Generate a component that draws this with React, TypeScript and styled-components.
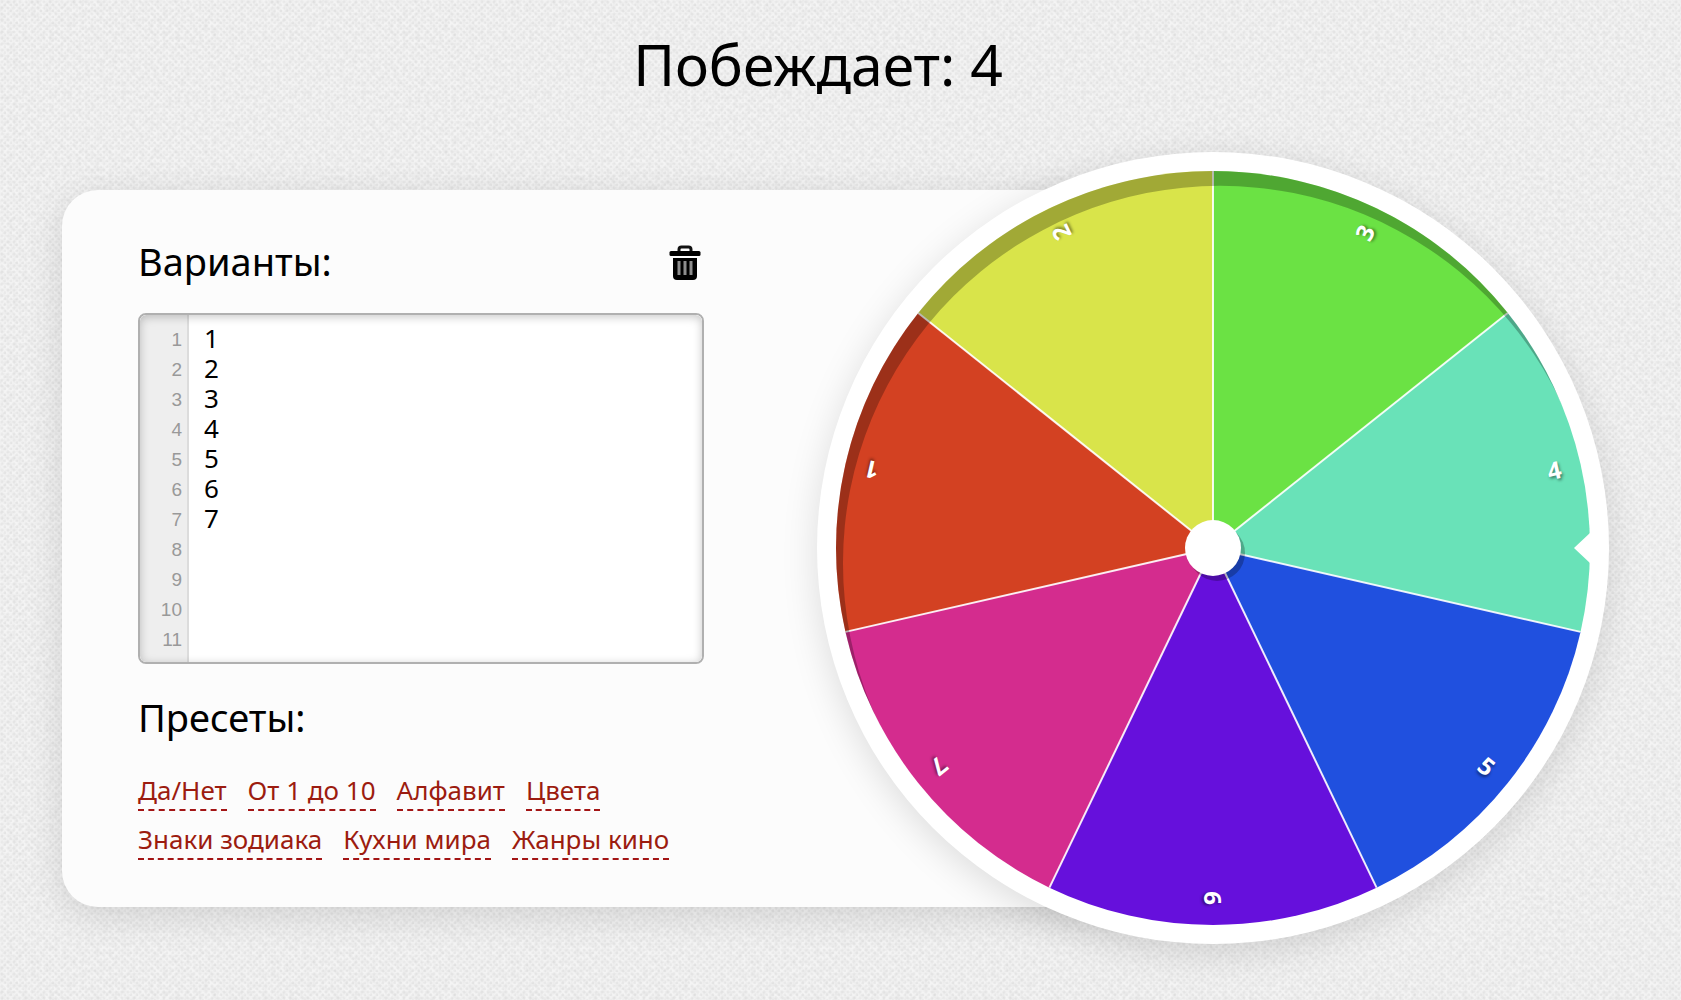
import React, { useState } from "react";
import styled, { createGlobalStyle } from "styled-components";

const noise =
  "<svg xmlns='http://www.w3.org/2000/svg' width='240' height='240'>" +
  "<filter id='n' x='0' y='0' width='100%' height='100%'>" +
  "<feTurbulence type='fractalNoise' baseFrequency='.22' numOctaves='3' seed='7' stitchTiles='stitch'/>" +
  "<feColorMatrix values='0 0 0 0 0  0 0 0 0 0  0 0 0 0 0  0.09 0 0 0 -0.03'/></filter>" +
  "<rect width='240' height='240' filter='url(#n)'/></svg>";

const GlobalStyle = createGlobalStyle`
  *, *::before, *::after { box-sizing: border-box; }
  body {
    margin: 0;
    min-height: 100vh;
    color: #000;
    font-family: "Noto Sans", "Open Sans", sans-serif;
    background-color: #f4f4f4;
    background-image:
      url("data:image/svg+xml,${encodeURIComponent(noise)}"),
      radial-gradient(circle at 2px 2px, rgba(0, 0, 0, 0.04) 1px, transparent 2px),
      radial-gradient(circle at 5px 5px, rgba(0, 0, 0, 0.04) 1px, transparent 2px);
    background-size: 240px 240px, 6px 6px, 6px 6px;
  }
`;

const Page = styled.main`
  padding: 24px 72px 56px 62px;
`;

const Winner = styled.h1`
  margin: 0 35px 48px 0;
  font-size: 57px;
  line-height: 80px;
  font-weight: 400;
  text-align: center;
`;

const Stage = styled.div`
  display: flex;
  align-items: center;
`;

const Panel = styled.section`
  flex: 1 1 0;
  min-width: 0;
  padding: 45px 76px 47px;
  border-radius: 36px;
  background: #fcfcfc;
  box-shadow: 0 8px 36px rgba(0, 0, 0, 0.12);
`;

const Form = styled.div`
  width: 566px;
  max-width: 100%;
`;

const HeadRow = styled.div`
  display: flex;
  align-items: center;
  justify-content: space-between;
  margin-bottom: 26px;
`;

const Heading = styled.h2`
  margin: 0;
  font-size: 38px;
  line-height: 52px;
  font-weight: 400;
`;

const ClearButton = styled.button`
  display: flex;
  margin: 4px 3px 0 0;
  padding: 0;
  border: 0;
  background: none;
  cursor: pointer;
`;

const Editor = styled.div`
  position: relative;
  display: flex;
  height: 351px;
  margin-bottom: 27px;
  overflow: hidden;
  border: 2px solid #b0b0b0;
  border-radius: 8px;
  background: #fff;

  &::after {
    content: "";
    position: absolute;
    inset: 0;
    border-radius: 6px;
    box-shadow: inset 0 2px 10px rgba(0, 0, 0, 0.22);
    pointer-events: none;
  }
`;

const Gutter = styled.ol`
  flex: none;
  width: 49px;
  margin: 0;
  padding: 10px 5px 0 0;
  border-right: 2px solid #dcdcdc;
  background: #eee;
  color: #999;
  font: 19px/30px "Liberation Sans", Arial, sans-serif;
  text-align: right;
  list-style: none;
`;

const Lines = styled.textarea`
  flex: 1;
  min-width: 0;
  padding: 8px 15px;
  border: 0;
  outline: 0;
  resize: none;
  background: #fff;
  color: #000;
  font: 26px/30px "Noto Sans", "Open Sans", sans-serif;
`;

const Presets = styled.nav`
  display: flex;
  flex-wrap: wrap;
  gap: 10px 21px;
  margin-top: 29px;
`;

const Preset = styled.a`
  padding-bottom: 1px;
  border-bottom: 2px dashed #a31515;
  color: #9c1c10;
  font-size: 26px;
  line-height: 36px;
  text-decoration: none;
`;

const Wheel = styled.div`
  position: relative;
  flex: 0 1 792px;
  margin-left: -400px;
  border-radius: 50%;
  background: #fff;
  box-shadow: 0 8px 36px rgba(0, 0, 0, 0.13);

  svg { display: block; width: 100%; height: auto; }
`;

const SectorLabel = styled.text`
  fill: #fff;
  font: 700 24px "Noto Sans", "Open Sans", sans-serif;
  text-anchor: middle;
  text-shadow: 1px 2px 3px rgba(0, 0, 0, 0.45);
`;

const TrashIcon = () => (
  <svg width="32" height="36" viewBox="0 0 32 36" aria-hidden="true">
    <path d="M10 7V4.500Q10 2 12.500 2H19.500Q22 2 22 4.500V7" fill="none" stroke="#111" strokeWidth="3" />
    <rect x="0.500" y="6" width="31" height="5" rx="1.500" fill="#000" />
    <path d="M4 13H28V31Q28 35 24 35H8Q4 35 4 31Z" fill="#000" />
    <path d="M10 16V30M16 16V30M22 16V30" stroke="#8d8d8d" strokeWidth="3" />
  </svg>
);

const RADIUS = 377;
const LABEL_RADIUS = 350;
const COLORS = ["#d34122", "#d9e44a", "#6be244", "#69e2b8", "#2050df", "#6610dc", "#d42c8e"];
const START = -167.143;

const at = (deg: number, r: number) => {
  const a = (deg * Math.PI) / 180;
  return `${(Math.cos(a) * r).toFixed(2)} ${(Math.sin(a) * r).toFixed(2)}`;
};

const WheelChart = ({ items }: { items: string[] }) => {
  const step = 360 / items.length;
  const first = START - step / 2;
  return (
    <svg viewBox="-396 -396 792 792" role="img" aria-label="Колесо">
      {items.map((item, i) => (
        <path
          key={item}
          fill={COLORS[i % COLORS.length]}
          d={`M0 0L${at(first + i * step, RADIUS)}A${RADIUS} ${RADIUS} 0 0 1 ${at(first + (i + 1) * step, RADIUS)}Z`}
        />
      ))}
      {items.map((item, i) => (
        <path key={item} d={`M0 0L${at(first + i * step, RADIUS)}`} stroke="#fff" strokeOpacity="0.9" strokeWidth="2" />
      ))}
      {items.map((item, i) => (
        <g key={item} transform={`rotate(${START + i * step}) translate(${LABEL_RADIUS} 0)`}>
          <SectorLabel y="9">{item}</SectorLabel>
        </g>
      ))}
      <clipPath id="disc">
        <circle r={RADIUS} />
      </clipPath>
      <path
        clipPath="url(#disc)"
        fillRule="evenodd"
        fill="#000"
        fillOpacity="0.26"
        d="M-396 -396H396V396H-396ZM-370 15a377 377 0 1 0 754 0a377 377 0 1 0 -754 0Z"
      />
      <circle cx="4" cy="5" r="28" fill="#000" fillOpacity="0.25" />
      <circle r="28" fill="#fff" />
      <path d="M361 0L378 -16V16Z" fill="#fff" />
    </svg>
  );
};

const PRESETS = ["Да/Нет", "От 1 до 10", "Алфавит", "Цвета", "Знаки зодиака", "Кухни мира", "Жанры кино"];

export default function App() {
  const [text, setText] = useState("1\n2\n3\n4\n5\n6\n7");
  const items = text.split("\n").filter(Boolean);
  return (
    <>
      <GlobalStyle />
      <Page>
        <Winner>Побеждает: 4</Winner>
        <Stage>
          <Panel>
            <Form>
              <HeadRow>
                <Heading as="label" htmlFor="variants">Варианты:</Heading>
                <ClearButton type="button" aria-label="Очистить" onClick={() => setText("")}>
                  <TrashIcon />
                </ClearButton>
              </HeadRow>
              <Editor>
                <Gutter aria-hidden="true">
                  {Array.from({ length: 11 }, (_, i) => (
                    <li key={i}>{i + 1}</li>
                  ))}
                </Gutter>
                <Lines id="variants" value={text} spellCheck={false} onChange={(e) => setText(e.target.value)} />
              </Editor>
              <Heading>Пресеты:</Heading>
              <Presets>
                {PRESETS.map((name) => (
                  <Preset key={name} href="#">{name}</Preset>
                ))}
              </Presets>
            </Form>
          </Panel>
          <Wheel>
            <WheelChart items={items} />
          </Wheel>
        </Stage>
      </Page>
    </>
  );
}
